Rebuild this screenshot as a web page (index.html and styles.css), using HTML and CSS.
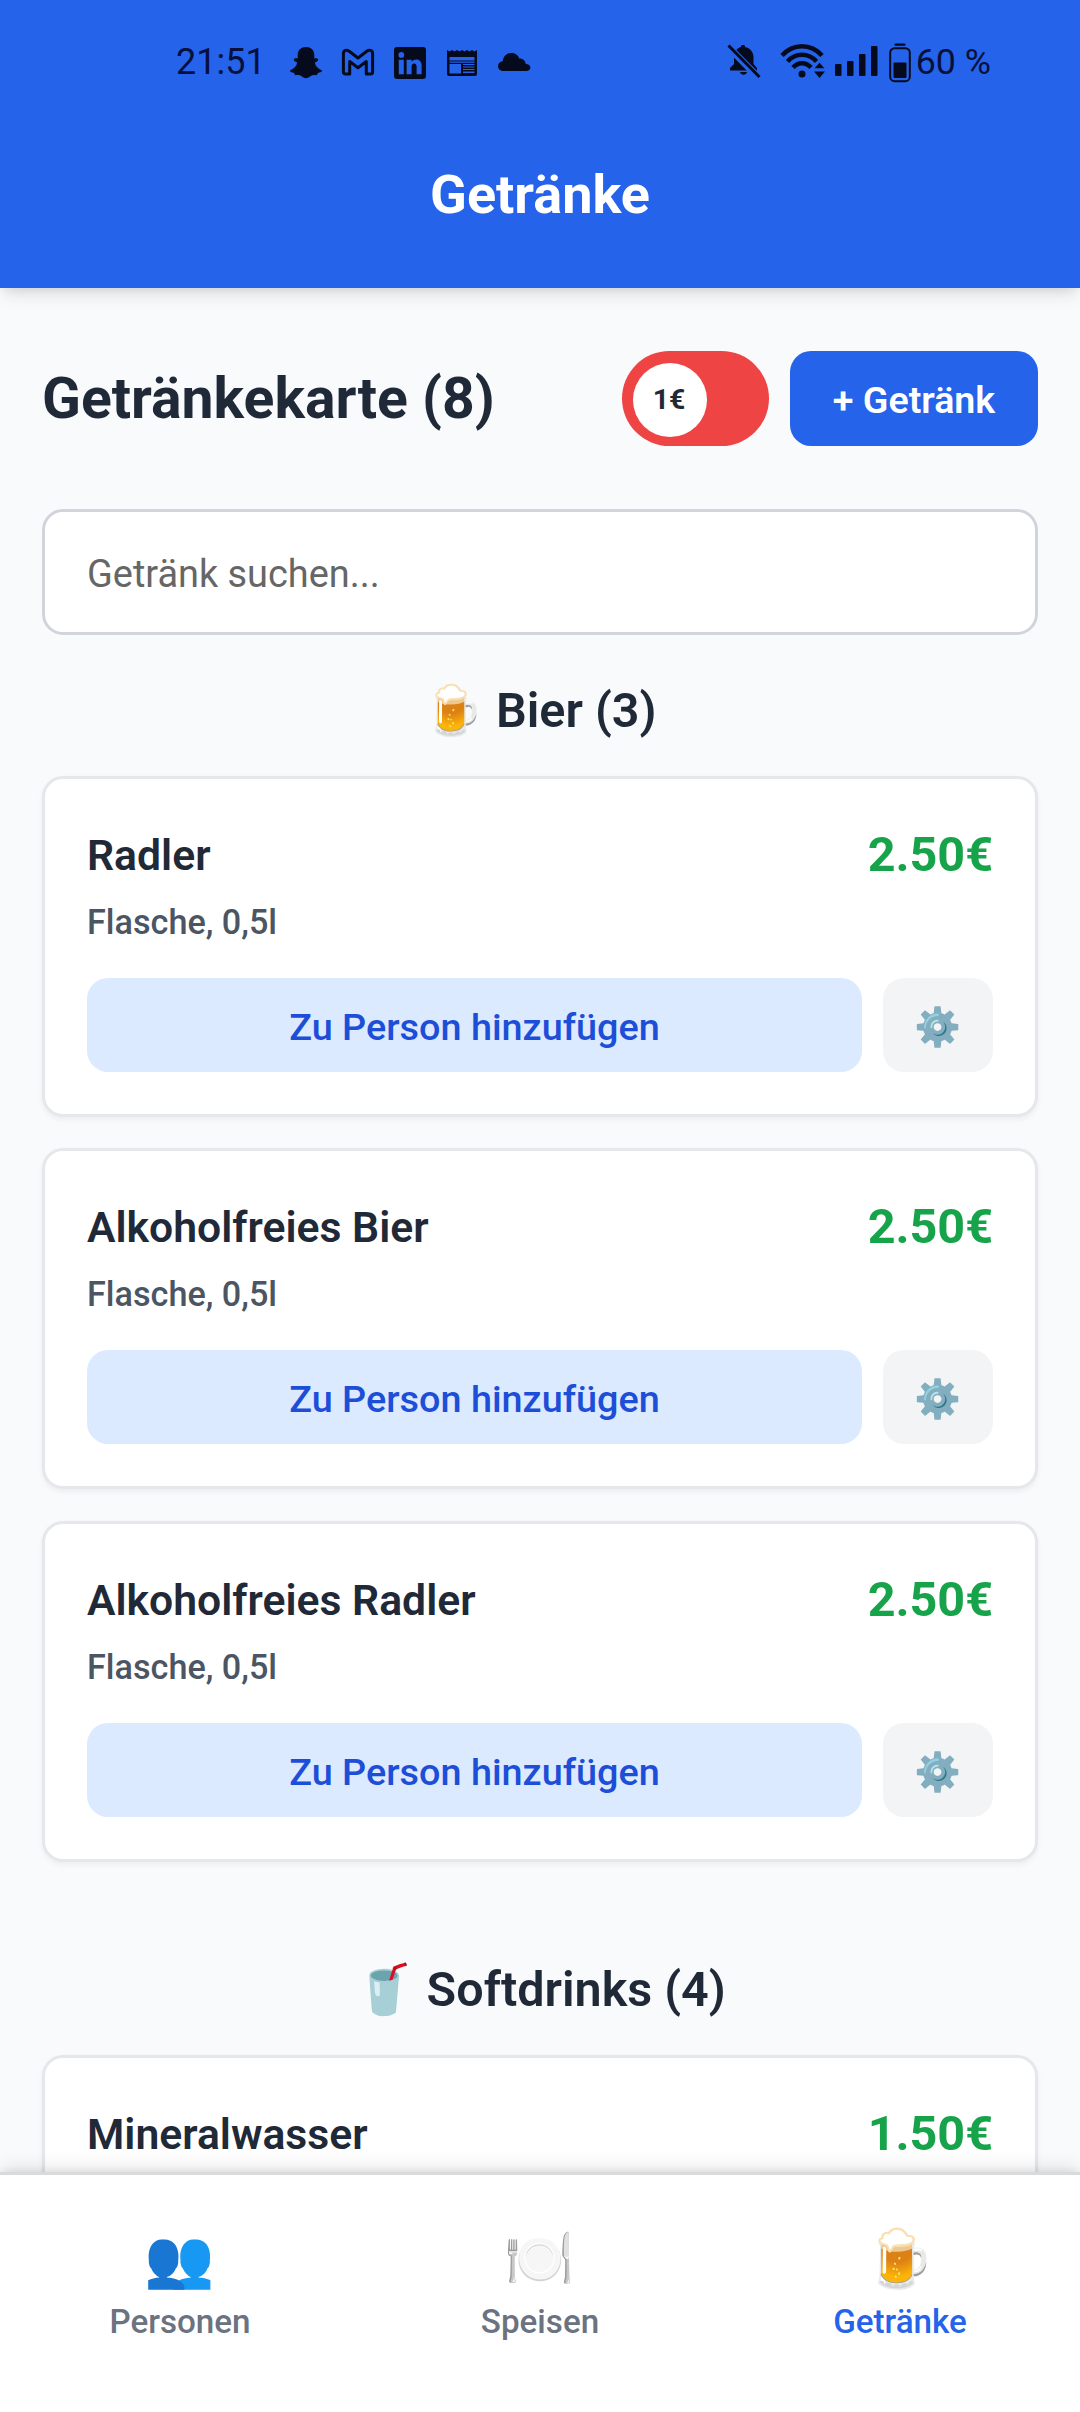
FILE: index.html
```html
<!DOCTYPE html>
<html lang="de">
<head>
<meta charset="utf-8">
<title>Getränke</title>
<link rel="stylesheet" href="styles.css">
</head>
<body>
<div class="app">
  <header class="header">
    <div class="status">
      <span class="clock">21:51</span>
      <div class="status-apps">
        <svg width="34" height="34" viewBox="0 0 34 34"><path d="M17 1C12 1 8.700 4.200 8.700 9v3.600C7 12 5 12.500 4.800 13.700c-.1 1.300 1.700 2 3.400 2.900C7.600 20.500 4.800 23 1 24.600c-.4 1.400 1.800 2 4.200 2.500l.9 2.100c2.500-.4 4.600-.3 6.300.9C13.900 31.400 15.300 32.300 17 32.300s3.100-.9 4.600-2.200c1.700-1.200 3.800-1.300 6.300-.9l.9-2.100c2.400-.5 4.600-1.100 4.200-2.500-3.800-1.600-6.600-4.100-7.200-8 1.700-.9 3.500-1.600 3.400-2.900-.2-1.200-2.200-1.700-3.900-1.100V9C25.300 4.200 22 1 17 1z"/></svg>
        <svg width="34" height="34" viewBox="0 0 34 34" fill="none" stroke="currentColor" stroke-width="3" stroke-linejoin="round"><path d="M2.400 7.500c0-3 3.300-4.300 5.500-2.500L17 12l9.100-7c2.200-1.800 5.500-.5 5.500 2.500V26c0 1.300-.8 2-2 2h-4.300V15.500L17 21.800l-8.300-6.300V28H4.400c-1.200 0-2-.7-2-2z"/></svg>
        <svg width="34" height="34" viewBox="0 0 34 34"><path fill-rule="evenodd" d="M4 1h26a3 3 0 0 1 3 3v26a3 3 0 0 1-3 3H4a3 3 0 0 1-3-3V4a3 3 0 0 1 3-3zM8.300 6a2.900 2.900 0 1 0 0 5.800 2.900 2.900 0 0 0 0-5.800zM5.800 13.700v14.500h5V13.700zM13.600 13.700v14.500h5v-7.700c0-3.800 5-4 5 0v7.700h5v-9c0-6.700-7.200-7.200-10-3.600v-1.900z"/></svg>
        <svg width="34" height="34" viewBox="0 0 34 34"><path fill-rule="evenodd" d="M2 4l2.500 1.500L7 4l2.500 1.500L12 4l2.500 1.500L17 4l2.500 1.500L22 4l2.500 1.500L27 4l2.500 1.500L32 4v24a2 2 0 0 1-2 2H4a2 2 0 0 1-2-2zM4.500 15.500v1.300h25V15.500zM4.500 18v9.500h11.500V18zM18 18v1h11.500V18zM18 20.500v1h11.500v-1zM18 23v1h11.500V23zM18 25.500v1.500h11.500v-1.500zM4.500 11v3.500h25V11z"/></svg>
        <svg width="34" height="34" viewBox="0 0 34 34"><path d="M6.500 25C3.500 25 1 23 1 20.200c0-2.700 2-4.700 4.700-4.900C6.200 10.500 9.700 7 14.300 7c3.700 0 6.800 2 8 5.400 3.600-.2 6.200 2.300 6.500 5.600 2.700.2 4.600 1.500 4.600 3.600 0 2-1.700 3.400-4 3.400z"/></svg>
      </div>
      <div class="status-right">
        <svg class="bell" width="34" height="36" viewBox="0 0 34 36"><path d="M7 13C8 7 11 4.800 14 4V3c0-1.500 4-1.500 4 0v1c5 1 8.500 5 8.500 10v7l3.500 4v2.500H3V25l4-4zM13 29h7c-.5 3.500-6.500 3.500-7 0z"/><path d="M1.500 4L32 35" stroke="#2563eb" stroke-width="7"/><path d="M1.500 2.500L32.500 34" stroke="currentColor" stroke-width="3"/></svg>
        <svg class="wifi" width="46" height="36" viewBox="0 0 46 36"><g fill="none" stroke="currentColor" stroke-width="4.500"><path d="M2 12.500C13 0 31 0 42 12.500"/><path d="M7.500 18.500c8-9 21-9 29 0"/><path d="M13 24.500c5-5.800 13-5.800 18 0"/></g><circle cx="22" cy="31" r="3.500"/><path d="M33 26l6.500-7.500L46 26z" stroke="#2563eb" stroke-width="1.500"/><path d="M34 28.500h11l-5.500 6.500z"/></svg>
        <svg class="signal" width="44" height="32" viewBox="0 0 44 32"><rect x="0" y="19" width="6.500" height="12" rx="1"/><rect x="12" y="16" width="6.500" height="15" rx="1"/><rect x="24" y="9" width="6.500" height="22" rx="1"/><rect x="36" y="1" width="6.500" height="30" rx="1"/></svg>
        <svg class="battery" width="22" height="40" viewBox="0 0 22 40"><rect x="5.500" y="0.500" width="11" height="2.200" rx="1"/><rect x="1.200" y="5.200" width="19.600" height="33" rx="4.500" fill="none" stroke="currentColor" stroke-width="2"/><rect x="4.500" y="19.500" width="13" height="15.500" rx="1"/></svg>
        <span class="percent">60 %</span>
      </div>
    </div>
    <h1 class="page-title">Getränke</h1>
  </header>

  <main class="content">
    <div class="toolbar">
      <h2 class="menu-title">Getränkekarte (8)</h2>
      <div class="toggle"><span class="knob">1€</span></div>
      <button class="add">+ Getränk</button>
    </div>
    <input class="search" type="text" placeholder="Getränk suchen...">

    <section class="group">
      <h3 class="group-title">🍺 Bier (3)</h3>
      <div class="cards">
        <article class="card">
          <div class="card-head"><span class="name">Radler</span><span class="price">2.50€</span></div>
          <p class="size">Flasche, 0,5l</p>
          <div class="actions"><button class="assign">Zu Person hinzufügen</button><button class="settings">⚙️</button></div>
        </article>
        <article class="card">
          <div class="card-head"><span class="name">Alkoholfreies Bier</span><span class="price">2.50€</span></div>
          <p class="size">Flasche, 0,5l</p>
          <div class="actions"><button class="assign">Zu Person hinzufügen</button><button class="settings">⚙️</button></div>
        </article>
        <article class="card">
          <div class="card-head"><span class="name">Alkoholfreies Radler</span><span class="price">2.50€</span></div>
          <p class="size">Flasche, 0,5l</p>
          <div class="actions"><button class="assign">Zu Person hinzufügen</button><button class="settings">⚙️</button></div>
        </article>
      </div>
    </section>

    <section class="group">
      <h3 class="group-title">🥤 Softdrinks (4)</h3>
      <div class="cards">
        <article class="card">
          <div class="card-head"><span class="name">Mineralwasser</span><span class="price">1.50€</span></div>
        </article>
      </div>
    </section>
  </main>

  <nav class="tabs">
    <a class="tab"><span class="tab-icon">👥</span><span class="tab-label">Personen</span></a>
    <a class="tab"><span class="tab-icon">🍽️</span><span class="tab-label">Speisen</span></a>
    <a class="tab active"><span class="tab-icon">🍺</span><span class="tab-label">Getränke</span></a>
  </nav>
</div>
</body>
</html>
```
FILE: styles.css
```css
* { box-sizing: border-box; margin: 0; padding: 0; }

body {
  font-family: Roboto, "Noto Color Emoji", sans-serif;
  color: #1f2937;
  background: #f9fafc;
}

button, input { font-family: inherit; border: 0; }

.app {
  display: flex;
  flex-direction: column;
  width: 1080px;
  height: 2412px;
  overflow: hidden;
}

/* Header with system status bar */
.header {
  flex: none;
  height: 288px;
  background: #2563eb;
  box-shadow: 0 10px 16px -3px rgba(0, 0, 0, .1), 0 5px 10px -5px rgba(0, 0, 0, .1);
  z-index: 1;
}

.status {
  display: flex;
  align-items: center;
  height: 101px;
  padding: 24px 89px 0 176px;
  color: #050b1c;
  font-size: 36px;
  line-height: 77px;
}

.status svg { display: block; fill: currentColor; }
.status svg[fill="none"] { fill: none; }
.clock { width: 113px; color: #06103c; }
.status-apps { display: flex; gap: 18px; }
.status-right { display: flex; align-items: center; margin-left: auto; }
.bell { margin-right: 19px; margin-top: -3px; }
.wifi { margin-right: 9px; margin-top: -4px; }
.signal { margin-right: 10px; margin-top: -3px; }
.percent { margin-left: 5px; color: #06103c; font-size: 35.800px; }

.page-title {
  color: #fff;
  font-size: 54px;
  font-weight: 700;
  line-height: 187px;
  text-align: center;
}

/* Scrolling content */
.content {
  flex: 1;
  min-height: 0;
  overflow: hidden;
  padding: 63px 42px 0;
}

.toolbar { display: flex; align-items: center; height: 95px; }

.menu-title {
  flex: 1;
  font-size: 57.100px;
  font-weight: 700;
  line-height: 95px;
}

.toggle {
  width: 147px;
  height: 95px;
  padding: 12px 11px;
  border-radius: 48px;
  background: #ef4444;
}

.knob {
  display: block;
  width: 74px;
  height: 74px;
  padding-right: 2px;
  border-radius: 50%;
  background: #fff;
  font-size: 28.500px;
  font-weight: 700;
  line-height: 73px;
  text-align: center;
}

.add {
  width: 248px;
  height: 95px;
  margin-left: 21px;
  padding-top: 3px;
  border-radius: 21px;
  background: #2563eb;
  color: #fff;
  font-size: 37.600px;
  font-weight: 600;
}

.search {
  display: block;
  width: 996px;
  height: 126px;
  margin-top: 63px;
  padding: 4px 42px 0;
  border: 3px solid #d1d5db;
  border-radius: 21px;
  background: #fff;
  font-size: 37.900px;
}

.search::placeholder { color: #666; }

.group-title {
  margin: 42px 0 32px;
  font-size: 48.500px;
  font-weight: 600;
  line-height: 67px;
  text-align: center;
}

.group + .group .group-title { margin-top: 94.200px; }

.cards { display: flex; flex-direction: column; gap: 31.400px; }

.card {
  height: 341px;
  padding: 42px;
  border: 3px solid #e5e7eb;
  border-radius: 21px;
  background: #fff;
  box-shadow: 0 2.600px 5px rgba(0, 0, 0, .05);
}

.card-head { display: flex; justify-content: space-between; height: 68px; }
.name { font-size: 42.700px; font-weight: 600; line-height: 68px; }
.price { color: #16a34a; font-size: 48.500px; font-weight: 700; line-height: 67px; }

.size {
  margin: 10px 0 33px;
  color: #4b5563;
  font-size: 34.200px;
  font-weight: 500;
  line-height: 46px;
}

.actions { display: flex; gap: 21px; height: 94px; }
.actions button { padding-top: 4px; border-radius: 21px; font-size: 37.800px; }
.assign { flex: 1; background: #dbeafe; color: #1d4ed8; font-weight: 500; }
.settings { width: 110px; background: #f3f4f6; }

/* Bottom navigation */
.tabs {
  flex: none;
  display: flex;
  height: 240px;
  padding-top: 42px;
  border-top: 3px solid #d8dadc;
  background: #fff;
  box-shadow: 0 -8px 16px -3px rgba(0, 0, 0, .1), 0 -2px 6px rgba(0, 0, 0, .05);
  z-index: 1;
}

.tab {
  flex: 1;
  display: flex;
  flex-direction: column;
  align-items: center;
  color: #6b7280;
}

.tab.active { color: #2563eb; }
.tab-icon { font-size: 56.500px; line-height: 84px; }
.tab-label { font-size: 33.200px; font-weight: 500; line-height: 42px; }
```
